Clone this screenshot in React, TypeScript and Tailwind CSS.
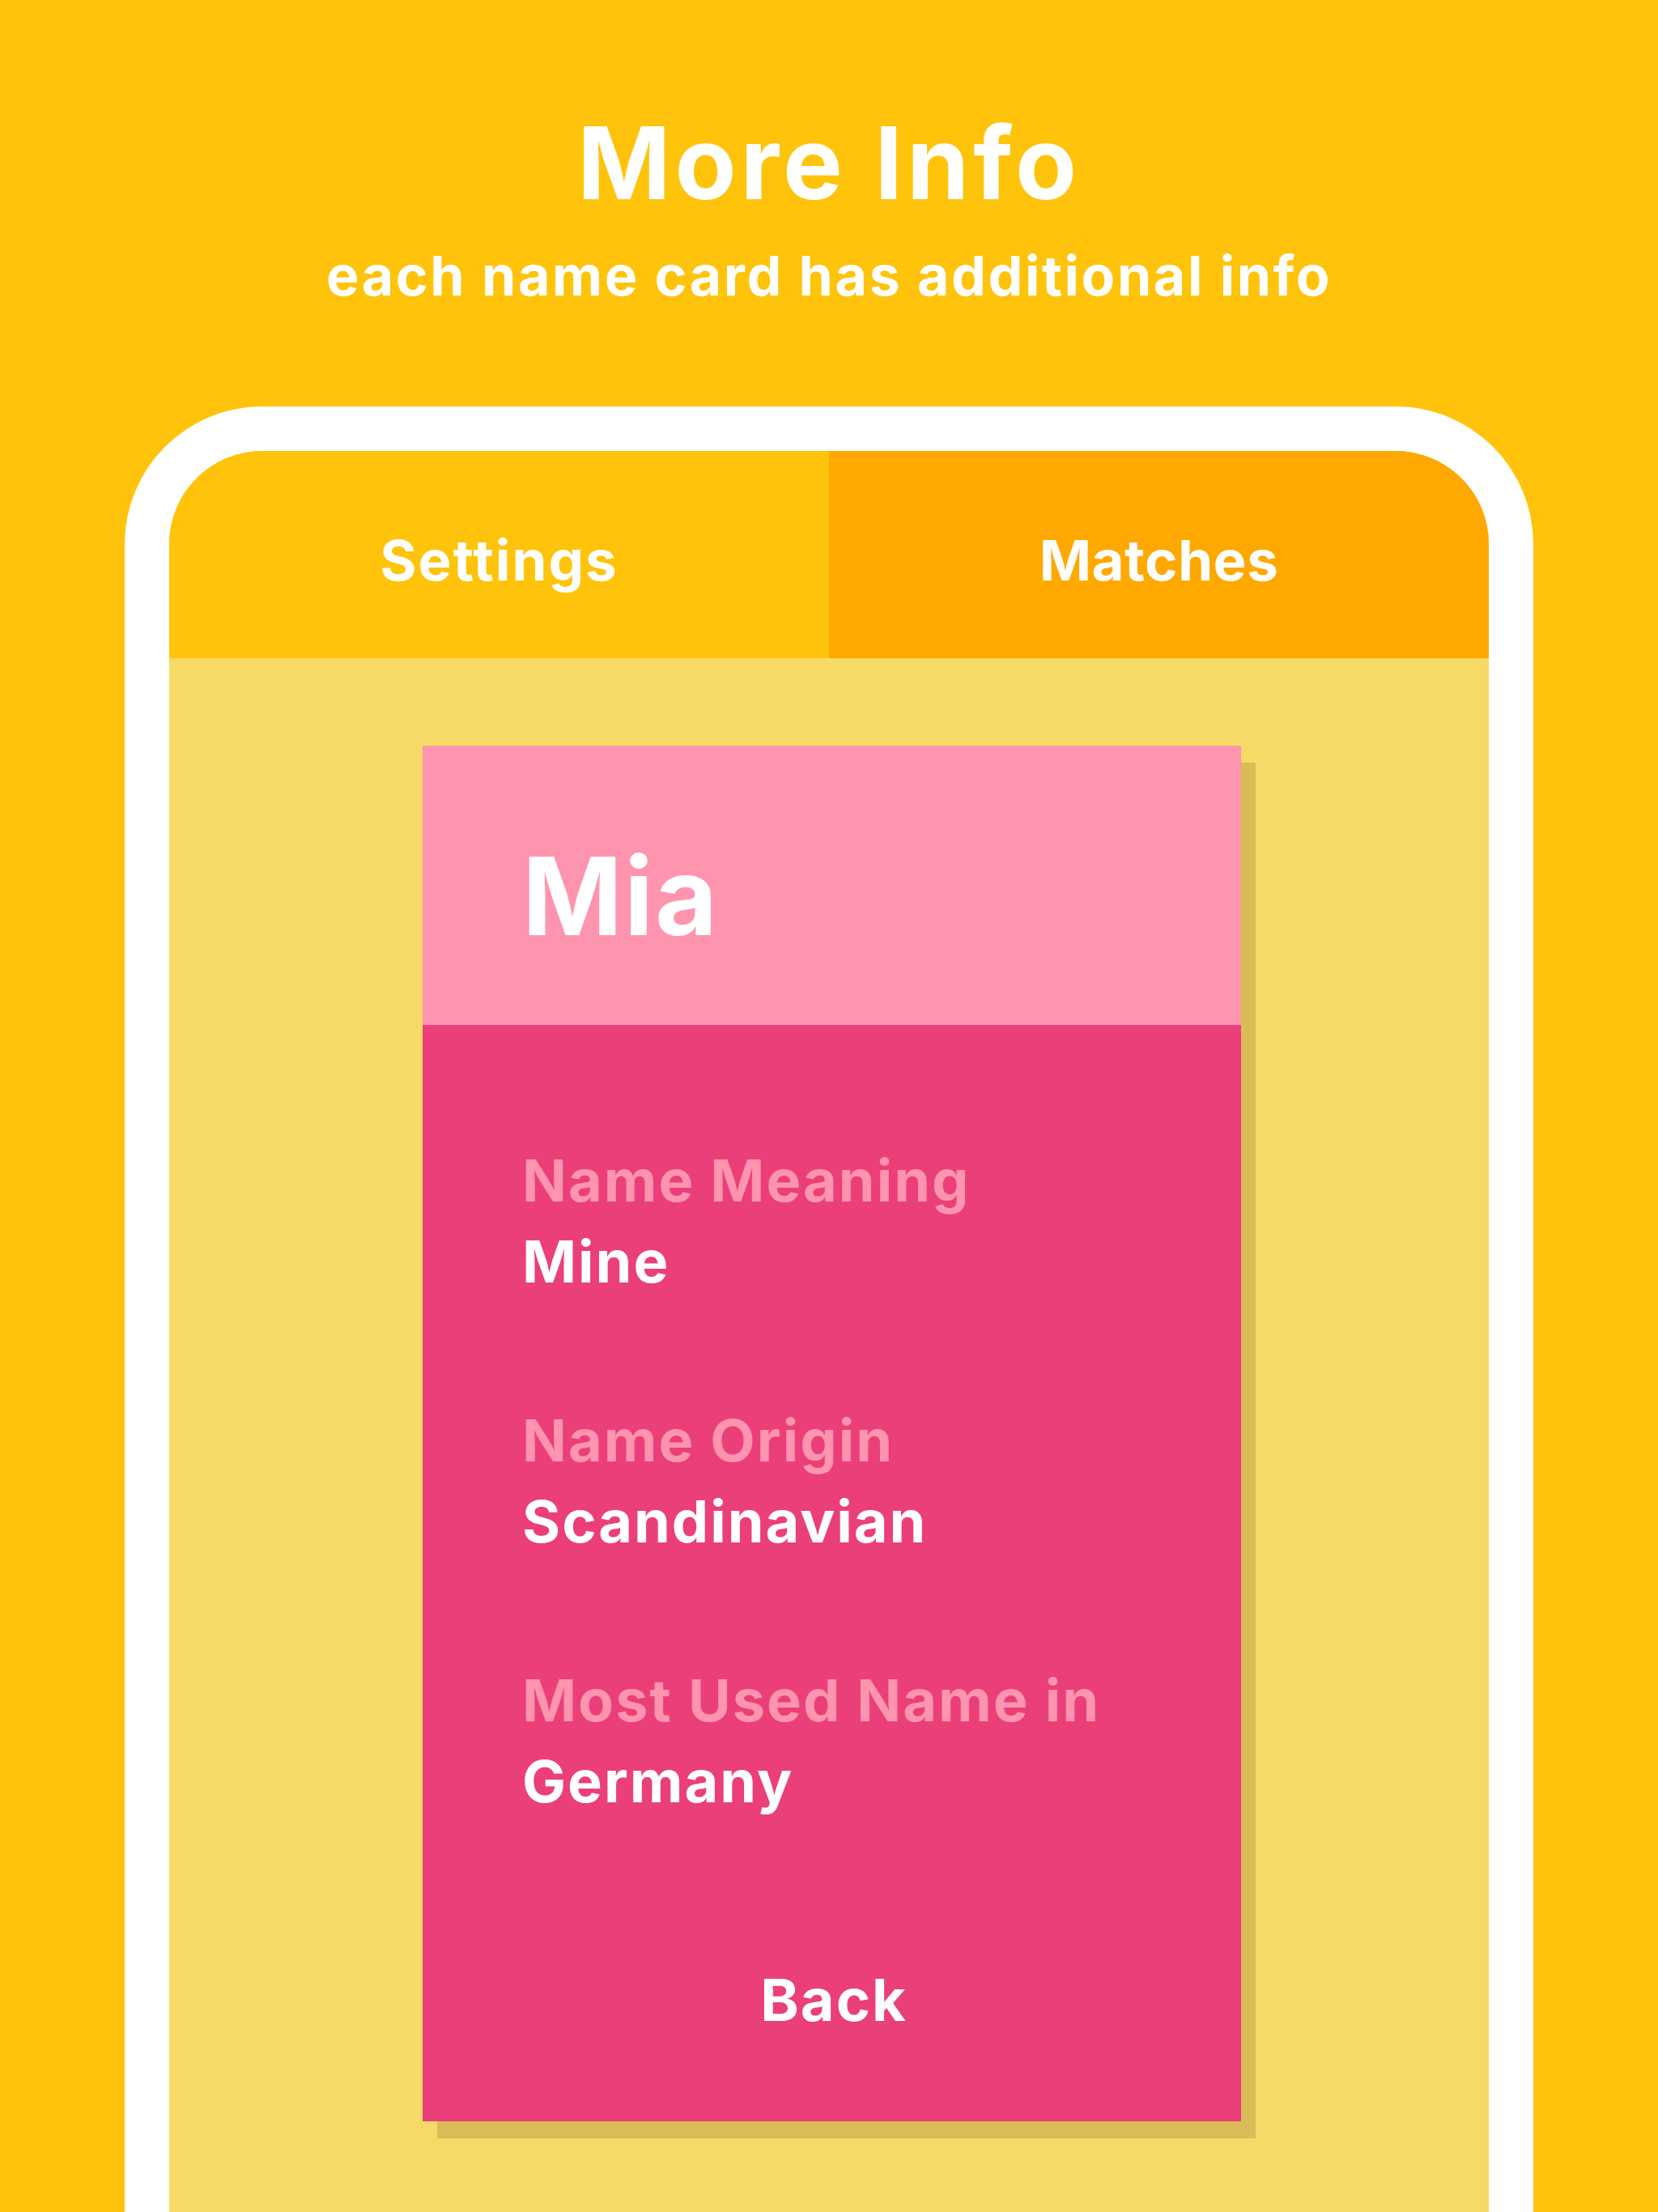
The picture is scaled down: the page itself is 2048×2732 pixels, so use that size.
import React from "react";

const font = { fontFamily: "Inter, 'Noto Sans', sans-serif" };

function Field({ label, value, last }: { label: string; value: string; last?: boolean }) {
  return (
    <div className={last ? "" : "mb-[121px]"}>
      <div className="text-[72px] leading-[100px] font-bold tracking-[2px] text-[#ff94ae]">{label}</div>
      <div className="text-[72px] leading-[100px] font-bold tracking-[2px] text-white">{value}</div>
    </div>
  );
}

export default function App() {
  return (
    <div
      className="w-[2048px] h-[2732px] overflow-hidden bg-[#ffc30b] flex flex-col items-center pt-[139px]"
      style={font}
    >
      <h1 className="text-[124px] leading-none font-bold tracking-[5px] text-white">More Info</h1>
      <p className="mt-[43px] text-[68px] leading-none font-bold tracking-[2.6px] text-white">
        each name card has additional info
      </p>
      <div className="mt-[128px] w-[1740px] h-[2400px] shrink-0 bg-white rounded-t-[170px] pt-[55px] px-[55px]">
        <div className="h-full rounded-t-[115px] overflow-hidden bg-[#f7d967] flex flex-col">
          <div className="flex h-[256px] shrink-0">
            <div className="flex-1 bg-[#ffc30b] pt-[101px] text-center text-[69px] leading-none font-bold tracking-[2px] text-white">
              Settings
            </div>
            <div className="flex-1 bg-[#ffa800] pt-[101px] text-center text-[69px] leading-none font-bold tracking-[0.5px] text-white">
              Matches
            </div>
          </div>
          <div className="pt-[108px] pl-[313px]">
            <div className="w-[1011px] shadow-[18px_21px_0_#d9bc58]">
              <div className="h-[345px] bg-[#ff94ae] pt-[119px] pl-[123px]">
                <div className="text-[133px] leading-none font-bold tracking-[2px] text-white">Mia</div>
              </div>
              <div className="h-[1354px] bg-[#eb3f79] pt-[142px] px-[123px]">
                <Field label="Name Meaning" value="Mine" />
                <Field label="Name Origin" value="Scandinavian" />
                <Field label="Most Used Name in" value="Germany" last />
                <div className="mt-[170px] pl-[5px] text-center text-[72px] leading-[100px] font-bold tracking-[2px] text-white">
                  Back
                </div>
              </div>
            </div>
          </div>
        </div>
      </div>
    </div>
  );
}
